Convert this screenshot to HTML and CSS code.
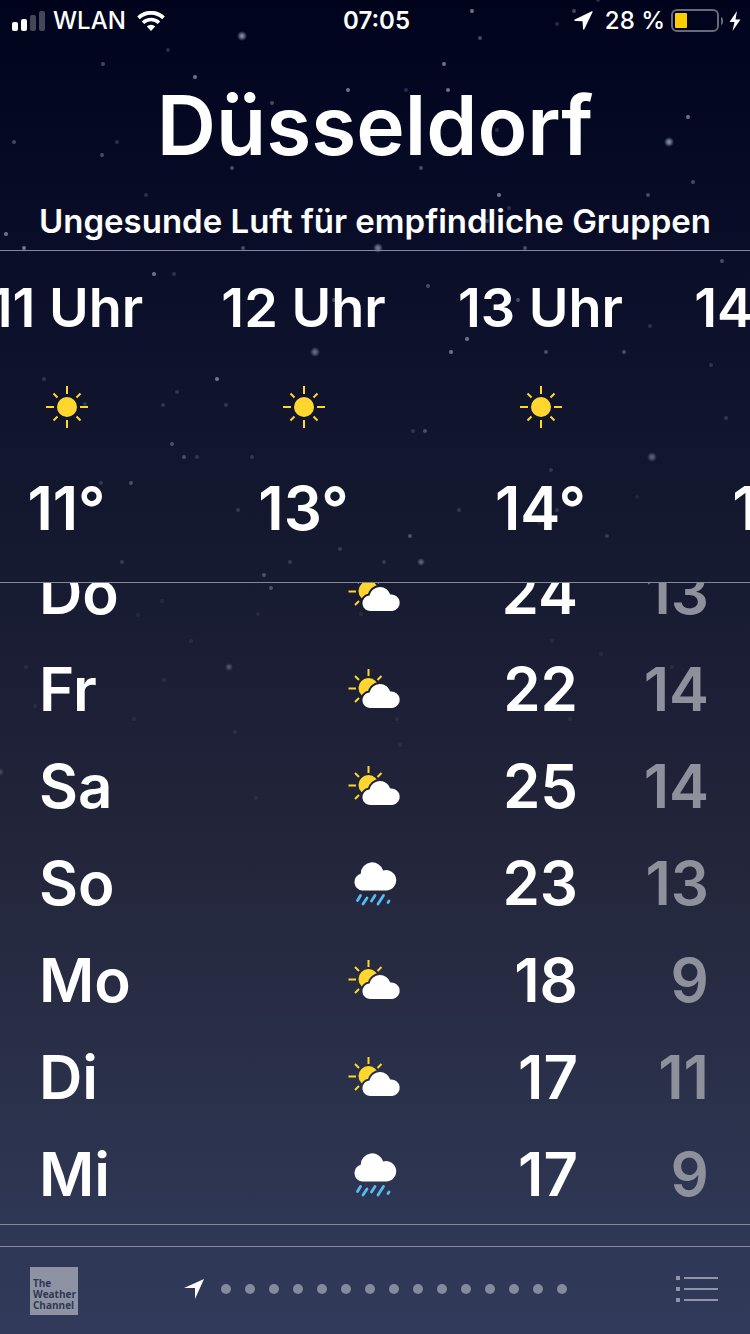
FILE: index.html
```html
<!DOCTYPE html>
<html lang="de">
  <head>
    <meta charset="UTF-8">
    <meta name="viewport" content="width=device-width, initial-scale=1">
    <title>Wetter – Düsseldorf</title>
    <link rel="stylesheet" href="styles.css">
  </head>
  <body>
    <!-- night sky -->
    <svg class="stars" viewBox="0 0 750 1334" preserveAspectRatio="xMidYMin slice" aria-hidden="true">
      <defs>
        <radialGradient id="glow">
          <stop offset="0" stop-color="#b4bfd6"/>
          <stop offset="0.4" stop-color="#98a2bc" stop-opacity="0.8"/>
          <stop offset="1" stop-color="#98a2bc" stop-opacity="0"/>
        </radialGradient>
      </defs>
      <g fill="url(#glow)">
        <circle cx="242" cy="36" r="5" opacity="0.8"/>
        <circle cx="669" cy="142" r="5" opacity="0.8"/>
        <circle cx="378" cy="248" r="5" opacity="0.7"/>
        <circle cx="315" cy="352" r="5" opacity="0.6"/>
        <circle cx="652" cy="457" r="5" opacity="0.5"/>
        <circle cx="421" cy="562" r="4" opacity="0.5"/>
        <circle cx="229" cy="667" r="4" opacity="0.4"/>
        <circle cx="0" cy="772" r="4" opacity="0.3"/>
      </g>
      <g class="stars-bright">
        <circle cx="195" cy="77" r="2"/>
        <circle cx="472" cy="11" r="2"/>
        <circle cx="348" cy="90" r="2"/>
        <circle cx="444" cy="64" r="2"/>
        <circle cx="448" cy="90" r="2"/>
        <circle cx="688" cy="117" r="2"/>
        <circle cx="499" cy="195" r="2"/>
        <circle cx="451" cy="352" r="2"/>
        <circle cx="467" cy="339" r="2"/>
        <circle cx="6" cy="234" r="2"/>
        <circle cx="24" cy="248" r="2"/>
        <circle cx="154" cy="274" r="2"/>
        <circle cx="217" cy="379" r="2"/>
      </g>
      <g class="stars-mid">
        <circle cx="574" cy="11" r="2"/>
        <circle cx="480" cy="38" r="2"/>
        <circle cx="103" cy="64" r="2"/>
        <circle cx="272" cy="103" r="2"/>
        <circle cx="14" cy="142" r="2"/>
        <circle cx="102" cy="155" r="2"/>
        <circle cx="232" cy="168" r="2"/>
        <circle cx="243" cy="248" r="2"/>
        <circle cx="421" cy="168" r="2"/>
        <circle cx="693" cy="182" r="2"/>
        <circle cx="648" cy="195" r="2"/>
        <circle cx="487" cy="221" r="2"/>
        <circle cx="525" cy="248" r="2"/>
        <circle cx="334" cy="300" r="2"/>
        <circle cx="722" cy="261" r="2"/>
        <circle cx="428" cy="286" r="2"/>
        <circle cx="518" cy="300" r="2"/>
        <circle cx="546" cy="352" r="2"/>
        <circle cx="624" cy="352" r="2"/>
        <circle cx="172" cy="444" r="2"/>
        <circle cx="184" cy="457" r="2"/>
        <circle cx="131" cy="483" r="2"/>
        <circle cx="425" cy="431" r="2"/>
        <circle cx="410" cy="536" r="2"/>
        <circle cx="264" cy="575" r="2"/>
        <circle cx="271" cy="588" r="2"/>
      </g>
      <g class="stars-dim">
        <circle cx="168" cy="50" r="2"/>
        <circle cx="557" cy="24" r="2"/>
        <circle cx="598" cy="0" r="2"/>
        <circle cx="117" cy="142" r="2"/>
        <circle cx="146" cy="195" r="2"/>
        <circle cx="406" cy="90" r="2"/>
        <circle cx="497" cy="130" r="2"/>
        <circle cx="509" cy="208" r="2"/>
        <circle cx="174" cy="274" r="2"/>
        <circle cx="44" cy="379" r="2"/>
        <circle cx="177" cy="392" r="2"/>
        <circle cx="163" cy="405" r="2"/>
        <circle cx="226" cy="405" r="2"/>
        <circle cx="85" cy="404" r="2"/>
        <circle cx="197" cy="457" r="2"/>
        <circle cx="252" cy="457" r="2"/>
        <circle cx="101" cy="483" r="2"/>
        <circle cx="238" cy="510" r="2"/>
        <circle cx="340" cy="549" r="2"/>
        <circle cx="122" cy="562" r="2"/>
        <circle cx="290" cy="562" r="2"/>
        <circle cx="650" cy="326" r="2"/>
        <circle cx="711" cy="365" r="2"/>
        <circle cx="726" cy="418" r="2"/>
        <circle cx="413" cy="431" r="2"/>
        <circle cx="551" cy="470" r="2"/>
        <circle cx="459" cy="510" r="2"/>
        <circle cx="557" cy="510" r="2"/>
        <circle cx="607" cy="536" r="2"/>
        <circle cx="384" cy="562" r="2"/>
      </g>
      <g class="stars-faint">
        <circle cx="637" cy="497" r="2"/>
        <circle cx="539" cy="523" r="2"/>
        <circle cx="162" cy="601" r="2"/>
        <circle cx="138" cy="615" r="2"/>
        <circle cx="258" cy="614" r="2"/>
        <circle cx="361" cy="614" r="2"/>
        <circle cx="191" cy="641" r="2"/>
        <circle cx="552" cy="641" r="2"/>
        <circle cx="601" cy="654" r="2"/>
        <circle cx="26" cy="667" r="2"/>
        <circle cx="672" cy="667" r="2"/>
        <circle cx="164" cy="680" r="2"/>
        <circle cx="35" cy="706" r="2"/>
        <circle cx="134" cy="719" r="2"/>
        <circle cx="397" cy="719" r="2"/>
        <circle cx="570" cy="719" r="2"/>
        <circle cx="235" cy="732" r="2"/>
        <circle cx="400" cy="745" r="2"/>
        <circle cx="256" cy="798" r="2"/>
      </g>
    </svg>

    <!-- shared weather icons -->
    <svg class="sprite" aria-hidden="true">
      <mask id="behind-cloud" maskUnits="userSpaceOnUse" x="0" y="0" width="54" height="42">
        <rect width="54" height="42" fill="#fff"/>
        <path d="M23 40a7.800 7.800 0 0 1-1.500-15.600a10.800 10.800 0 0 1 20.800-0.900A8.300 8.300 0 0 1 44.500 40z" fill="#000" stroke="#000" stroke-width="4"/>
      </mask>
      <symbol id="sun" viewBox="0 0 42 42">
        <circle cx="21" cy="21" r="10" fill="#ffd62e"/>
        <path d="M21 0v8M21 34v8M0 21h8M34 21h8M7.500 7.500l4 4M30.500 30.500l4 4M34.500 7.500l-4 4M11.500 30.500l-4 4" stroke="#ffd62e" stroke-width="2" fill="none"/>
      </symbol>
      <symbol id="partly" viewBox="0 0 54 42">
        <circle cx="20.500" cy="20" r="10" fill="#ffd62e" mask="url(#behind-cloud)"/>
        <path d="M20.500 1v7M0.500 20.500h7.500M7 8l4 4M33.500 8l-4 4M11 30l-4 4" stroke="#ffd62e" stroke-width="2" fill="none"/>
        <path d="M23 40a7.800 7.800 0 0 1-1.500-15.600a10.800 10.800 0 0 1 20.800-0.900A8.300 8.300 0 0 1 44.500 40z" fill="#fff"/>
      </symbol>
      <symbol id="rain" viewBox="0 0 44 46">
        <path d="M9 30.500a8.600 8.600 0 0 1-1.300-16.800a11.500 11.500 0 0 1 22.500-3.200A10.200 10.200 0 1 1 33 30.500z" fill="#fff"/>
        <path d="M7.500 35.500l-3 5M14 38l-4 6M22 35.500l-3.500 5.500M30.500 35.500l-5.500 8.500M36 41l-1 1.500" stroke="#55bdf5" stroke-width="2.800" stroke-linecap="round" fill="none"/>
      </symbol>
    </svg>

    <div class="app">
      <header class="status">
        <div class="status-left">
          <svg width="34" height="20" viewBox="0 0 34 20">
            <rect x="0" y="11" width="6" height="9" rx="2" fill="#fff"/>
            <rect x="9" y="8" width="6" height="12" rx="2" fill="#fff"/>
            <rect x="18" y="4" width="6" height="16" rx="2" fill="#454659"/>
            <rect x="27" y="0" width="6" height="20" rx="2" fill="#454659"/>
          </svg>
          <span>WLAN</span>
          <svg class="wifi" width="28" height="20" viewBox="0 0 28 20">
            <path d="M1.500 6.800a18 18 0 0 1 25 0" stroke="#fff" stroke-width="3.800" fill="none"/>
            <path d="M6 11.800a11.500 11.500 0 0 1 16 0" stroke="#fff" stroke-width="3.600" fill="none"/>
            <path d="M9.800 15.500a6 6 0 0 1 8.400 0L14 20z" fill="#fff"/>
          </svg>
        </div>
        <time>07:05</time>
        <div class="status-right">
          <svg width="19" height="19" viewBox="0 0 19 19">
            <path d="M17.800 0.300L0.800 8.500c-0.900 0.500-0.600 1.400 0.300 1.400l7.500 0.300l0.400 7.600c0.100 1 1 1.100 1.400 0.300L18.600 1C18.800 0.400 18.400 0 17.800 0.300z" fill="#fff"/>
          </svg>
          <span>28 %</span>
          <svg width="52" height="24" viewBox="0 0 52 24">
            <rect x="1" y="1" width="46" height="21" rx="5" fill="none" stroke="#686a7b" stroke-width="2"/>
            <rect x="4" y="4" width="12" height="15" rx="1" fill="#ffcc00"/>
            <path d="M50 8c3 1 3 7 0 8z" fill="#686a7b"/>
          </svg>
          <svg width="12" height="20" viewBox="0 0 12 20">
            <path d="M8 0L0.500 11h5L3.500 20L11.500 8.500h-5z" fill="#fff"/>
          </svg>
        </div>
      </header>

      <div class="city">
        <h1>Düsseldorf</h1>
        <p>Ungesunde Luft für empfindliche Gruppen</p>
      </div>

      <section class="hourly">
        <ul class="hourly-track">
          <li>
            <span class="hour">11 Uhr</span>
            <svg class="sun"><use href="#sun"/></svg>
            <span class="temp">11°</span>
          </li>
          <li>
            <span class="hour">12 Uhr</span>
            <svg class="sun"><use href="#sun"/></svg>
            <span class="temp">13°</span>
          </li>
          <li>
            <span class="hour">13 Uhr</span>
            <svg class="sun"><use href="#sun"/></svg>
            <span class="temp">14°</span>
          </li>
          <li>
            <span class="hour">14 Uhr</span>
            <svg class="sun"><use href="#sun"/></svg>
            <span class="temp">15°</span>
          </li>
        </ul>
      </section>

      <section class="daily">
        <table>
          <tr>
            <th scope="row">Do</th>
            <td class="icon"><svg class="partly"><use href="#partly"/></svg></td>
            <td class="high">24</td>
            <td class="low">13</td>
          </tr>
          <tr>
            <th scope="row">Fr</th>
            <td class="icon"><svg class="partly"><use href="#partly"/></svg></td>
            <td class="high">22</td>
            <td class="low">14</td>
          </tr>
          <tr>
            <th scope="row">Sa</th>
            <td class="icon"><svg class="partly"><use href="#partly"/></svg></td>
            <td class="high">25</td>
            <td class="low">14</td>
          </tr>
          <tr>
            <th scope="row">So</th>
            <td class="icon"><svg class="rain"><use href="#rain"/></svg></td>
            <td class="high">23</td>
            <td class="low">13</td>
          </tr>
          <tr>
            <th scope="row">Mo</th>
            <td class="icon"><svg class="partly"><use href="#partly"/></svg></td>
            <td class="high">18</td>
            <td class="low">9</td>
          </tr>
          <tr>
            <th scope="row">Di</th>
            <td class="icon"><svg class="partly"><use href="#partly"/></svg></td>
            <td class="high">17</td>
            <td class="low">11</td>
          </tr>
          <tr>
            <th scope="row">Mi</th>
            <td class="icon"><svg class="rain"><use href="#rain"/></svg></td>
            <td class="high">17</td>
            <td class="low">9</td>
          </tr>
        </table>
      </section>

      <footer class="toolbar">
        <a class="twc" href="#">The<br>Weather<br>Channel</a>
        <div class="pages">
          <svg width="20" height="20" viewBox="0 0 20 20">
            <path d="M20 0L0 9h11v11z" fill="#fff"/>
          </svg>
          <i></i><i></i><i></i><i></i><i></i><i></i><i></i><i></i>
          <i></i><i></i><i></i><i></i><i></i><i></i><i></i>
        </div>
        <button class="list" type="button" aria-label="Liste">
          <svg width="42" height="26" viewBox="0 0 42 26" fill="#9095a6">
            <path d="M0 0h4v4H0zM0 11h4v4H0zM0 22h4v4H0zM8 1h34v2H8zM8 12h34v2H8zM8 23h34v2H8z"/>
          </svg>
        </button>
      </footer>
    </div>
  </body>
</html>
```
FILE: styles.css
```css
*{
  box-sizing: border-box;
}
html, body{
  height: 100%;
  margin: 0;
  padding: 0;
}
body{
  position: relative;
  overflow: hidden;
  color: #fff;
  font-family: "Inter", "Liberation Sans", sans-serif;
  font-weight: 600;
  background: linear-gradient(#00031c 0%, #0a0e29 20%, #161a30 42%, #1b1e34 50%, #24273c 66%, #2e3754 92%, #313a5a 100%);
}
h1, p, ul{
  margin: 0;
  padding: 0;
}
svg{
  display: block;
  flex: none;
}
.sprite{
  position: absolute;
  width: 0;
  height: 0;
}

/* stars */
.stars{
  position: absolute;
  top: 0;
  left: 0;
  width: 100%;
  height: 100%;
}
.stars-bright{
  fill: #9aa2b6;
  opacity: 0.7;
}
.stars-mid{
  fill: #8089a0;
  opacity: 0.5;
}
.stars-dim{
  fill: #7c849b;
  opacity: 0.3;
}
.stars-faint{
  fill: #7c849b;
  opacity: 0.15;
}

.app{
  position: relative;
  display: flex;
  flex-direction: column;
  height: 100%;
}

/* status bar */
.status{
  display: grid;
  grid-template-columns: 1fr auto 1fr;
  align-items: center;
  flex: none;
  height: 41px;
  padding: 0 9px 0 12px;
  font-size: 24px;
  line-height: 41px;
}
.status-left,
.status-right{
  display: flex;
  align-items: center;
  font-weight: 500;
}
.status-left{
  gap: 7px;
}
.status-right{
  justify-content: flex-end;
  gap: 6px;
}
.status-right span{
  margin-left: 6px;
}
.wifi{
  margin-left: 4px;
}

/* city */
.city{
  flex: none;
  height: 209px;
  padding-top: 35px;
  text-align: center;
}
.city h1{
  font-size: 82px;
  font-weight: 600;
  line-height: 100px;
}
.city p{
  margin-top: 23px;
  font-size: 33px;
  line-height: 44px;
  white-space: nowrap;
}

/* hourly strip */
.hourly{
  flex: none;
  overflow: hidden;
  border-top: 1px solid #858896;
  border-bottom: 1px solid #858896;
}
.hourly-track{
  display: flex;
  margin-left: -52px;
  list-style: none;
}
.hourly-track li{
  display: flex;
  flex: none;
  flex-direction: column;
  align-items: center;
  width: 237px;
  height: 331px;
  padding-top: 25px;
}
.hour{
  font-size: 54px;
  line-height: 64px;
}
.sun{
  width: 42px;
  height: 42px;
  margin: 46px 0;
}
.temp{
  font-size: 60px;
  line-height: 68px;
}

/* daily list, scrolled to the end */
.daily{
  display: flex;
  flex: 1 1 0;
  flex-direction: column;
  justify-content: flex-end;
  min-height: 0;
  overflow: hidden;
  border-bottom: 1px solid #858896;
}
.daily table{
  width: 100%;
  table-layout: fixed;
  border-collapse: collapse;
  font-size: 60px;
  line-height: 97px;
}
.daily tr{
  height: 97px;
}
.daily th,
.daily td{
  padding: 0 0 2px;
  font-weight: 600;
  line-height: 95px;
}
.daily th{
  padding-left: 39px;
  text-align: left;
}
.daily .icon{
  width: 60px;
  padding-bottom: 4px;
}
.daily .icon svg{
  margin: 0 auto;
}
.daily .high,
.daily .low{
  text-align: right;
}
.daily .high{
  width: 173px;
}
.daily .low{
  width: 172px;
  padding-right: 41px;
  color: #8e909c;
}
.partly{
  width: 54px;
  height: 42px;
}
.rain{
  width: 44px;
  height: 46px;
}

/* bottom toolbar */
.toolbar{
  display: flex;
  align-items: center;
  justify-content: space-between;
  flex: none;
  height: 88px;
  margin-top: 21px;
  padding: 0 32px 4px 30px;
  border-top: 1px solid #858896;
}
.twc{
  width: 48px;
  height: 48px;
  margin-top: 4px;
  padding: 11px 0 0 3px;
  background: #8e93a4;
  color: #2f3856;
  font-family: "Open Sans", sans-serif;
  font-size: 10px;
  font-weight: 700;
  line-height: 11px;
  text-decoration: none;
}
.pages{
  display: flex;
  align-items: center;
  gap: 14px;
}
.pages svg{
  margin-right: 3px;
}
.pages i{
  width: 10px;
  height: 10px;
  border-radius: 50%;
  background: #858a9d;
}
.list{
  display: flex;
  justify-content: flex-end;
  width: 46px;
  padding: 0;
  border: 0;
  background: none;
}
```
